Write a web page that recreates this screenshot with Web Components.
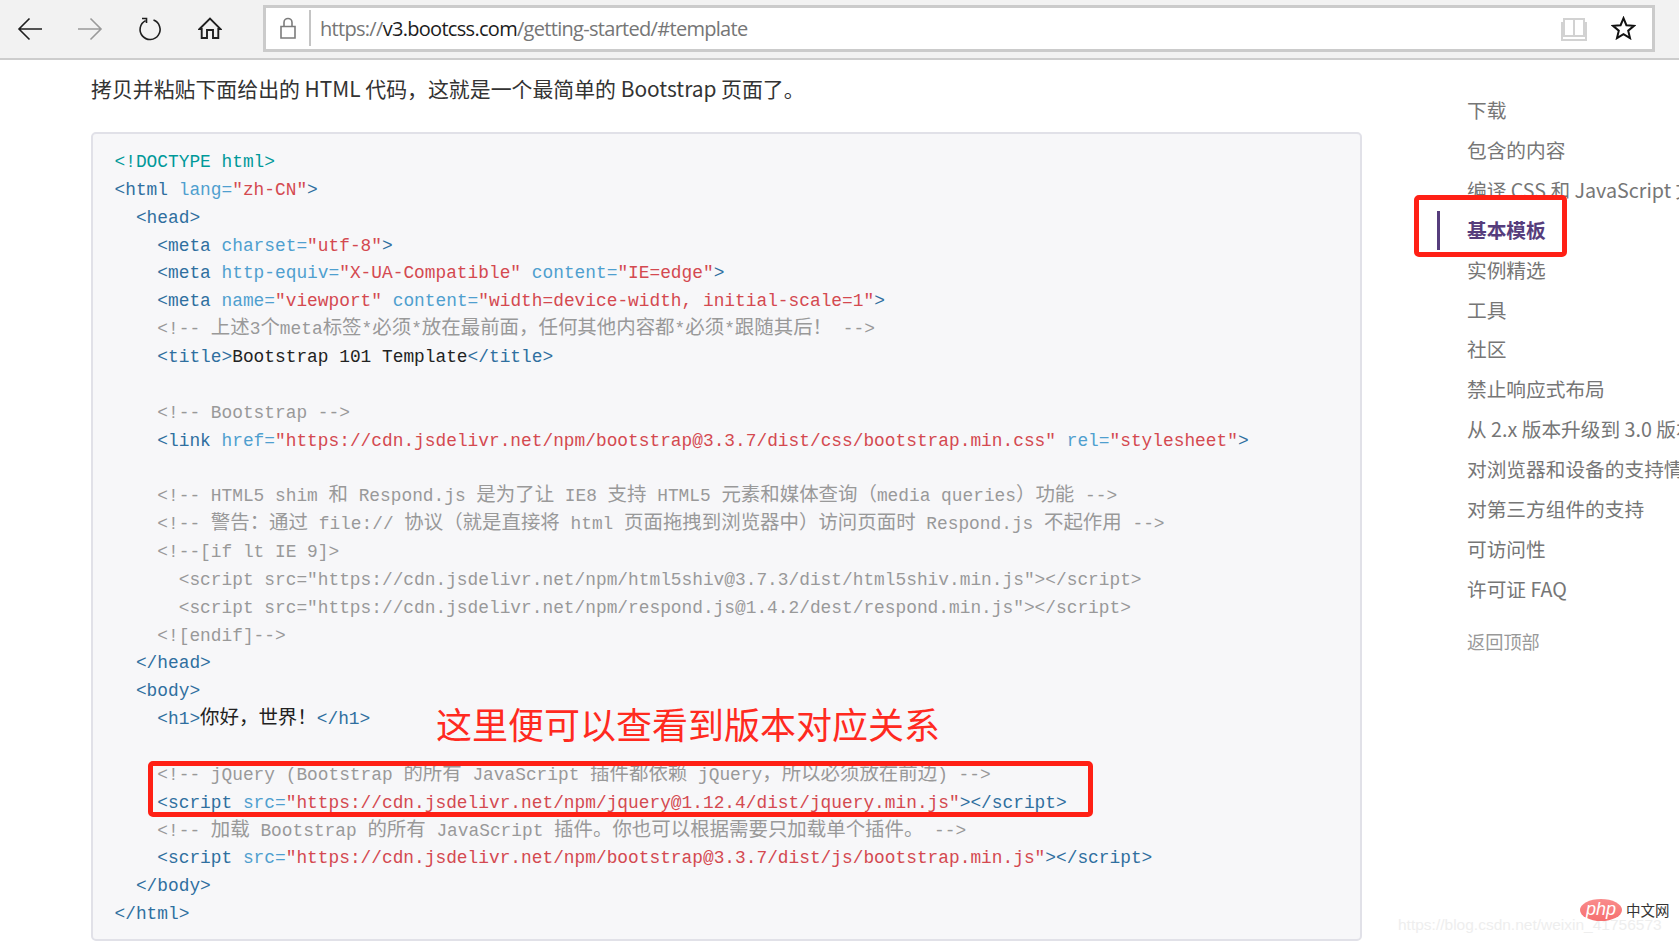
<!DOCTYPE html>
<html lang="zh-CN">
<head>
<meta charset="utf-8">
<title>基本模板</title>
<style>
  html, body { margin: 0; padding: 0; height: 943px; overflow: hidden; background: #fff; }
  body { font-family: "Noto Sans CJK SC", sans-serif; }
</style>
</head>
<body>
<browser-bar url="https://v3.bootcss.com/getting-started/#template"></browser-bar>
<doc-page>
  <code-block></code-block>
  <side-nav slot="side"></side-nav>
</doc-page>
<script>
class BrowserBar extends HTMLElement {
    constructor() {
        super();
        this.shadowDOM = this.attachShadow({ mode: "open" });
    }

    connectedCallback() {
        this.render();
    }

    render() {
        const url = this.getAttribute("url");
        const host = url.slice(8, 22);
        const rest = url.slice(22);
        this.shadowDOM.innerHTML = `
        <style>
          :host {
            display: flex;
            align-items: center;
            height: 58px;
            background: #f2f2f2;
            border-bottom: 2px solid #cdcdcd;
            font-family: "Open Sans", sans-serif;
          }
          .btn {
            width: 60px;
            height: 58px;
            display: flex;
            align-items: center;
            justify-content: center;
            flex: none;
          }
          svg { display: block; fill: none; stroke: #1f1f1f; stroke-width: 1.6; flex: none; }
          .nav { display: flex; width: 263px; flex: none; }
          .url {
            flex: none;
            width: 1386px;
            height: 41px;
            margin-top: -2px;
            background: #fff;
            border: 3px solid #cbcbcb;
            display: flex;
            align-items: center;
          }
          .lock { width: 43px; height: 36px; display: flex; align-items: center; justify-content: center; border-right: 2px solid #c4c4c4; flex: none; }
          .addr { padding-left: 9px; flex: 1; font-size: 20px; letter-spacing: -0.700px; color: #767676; white-space: nowrap; }
          .addr b { font-weight: 400; color: #1c1c1c; }
          .end { display: flex; align-items: center; gap: 24px; padding-right: 16px; }
          .book { margin-top: 3px; stroke: #d2d2d2; stroke-width: 2; }
        </style>
        <div class="nav">
          <div class="btn"><svg width="26" height="24" viewBox="0 0 26 24"><path d="M25 12H2M12.500 1.500 2 12l10.500 10.500"/></svg></div>
          <div class="btn"><svg width="26" height="24" viewBox="0 0 26 24" style="stroke:#9a9a9a"><path d="M1 12h23M13.500 1.500 24 12 13.500 22.500"/></svg></div>
          <div class="btn"><svg width="24" height="26" viewBox="0 0 24 26"><path d="M15.500 4.100A10 10 0 1 1 7.500 4.600M4 2.500H8.500V7"/></svg></div>
          <div class="btn"><svg width="24" height="24" viewBox="0 0 24 24" style="stroke-width:1.900"><path d="M1.500 12 12 1.500 22.500 12H20.300V21H15V13H9V21H3.700V12z"/></svg></div>
        </div>
        <div class="url">
          <div class="lock"><svg width="16" height="22" viewBox="0 0 16 22" style="stroke:#7c7c7c"><path d="M4 9V5.500a4 4 0 0 1 8 0V9M1 9.500h14V21H1z"/></svg></div>
          <div class="addr">https://<b>${host}</b>${rest}</div>
          <div class="end">
            <svg class="book" width="26" height="24" viewBox="0 0 26 24"><path d="M3 1h10v17H3zM13 1h10v17H13zM3 5H1v17h24V5h-2"/></svg>
            <svg width="25" height="24" viewBox="0 0 25 24" style="stroke:#111;stroke-width:2"><path d="M12.500 2.200 15.400 9.200l7.600.6-5.800 4.900 1.800 7.400-6.500-4-6.500 4 1.800-7.400L2 9.800l7.600-.6z"/></svg>
          </div>
        </div>`;
    }
}

class DocPage extends HTMLElement {
    constructor() {
        super();
        this.shadowDOM = this.attachShadow({ mode: "open" });
    }

    connectedCallback() {
        this.render();
    }

    render() {
        this.shadowDOM.innerHTML = `
        <style>
          :host {
            display: grid;
            grid-template-columns: 1271px 1fr;
            column-gap: 105px;
            padding-left: 91px;
            position: relative;
            height: 883px;
            overflow: hidden;
            font-family: "Noto Sans CJK SC", sans-serif;
          }
          p {
            margin: 10px 0 26px;
            line-height: 36px;
            font-size: 20.900px;
            color: #333;
            white-space: nowrap;
          }
          .red {
            position: absolute;
            box-sizing: border-box;
            border: 5px solid #ff2015;
            border-radius: 5px;
          }
          .note {
            position: absolute;
            left: 436px;
            top: 637px;
            font-size: 36px;
            line-height: 52px;
            color: #ff2a1f;
            white-space: nowrap;
          }
          .mark {
            position: absolute;
            left: 1398px;
            top: 854px;
            font: 15.500px/22px "Liberation Sans", sans-serif;
            color: #eeeeee;
            white-space: nowrap;
          }
          .php {
            position: absolute;
            left: 1580px;
            top: 839px;
            display: flex;
            align-items: center;
            gap: 4px;
            white-space: nowrap;
          }
          .php i {
            width: 42px;
            height: 22px;
            border-radius: 50%;
            background: linear-gradient(#f98c8c, #f66f6f);
            color: #fff;
            font: italic 18px/20px "Liberation Sans", sans-serif;
            text-align: center;
          }
          .php span { font: 14.500px/22px "Noto Sans CJK SC", sans-serif; color: #333; }
        </style>
        <div>
          <p>拷贝并粘贴下面给出的 HTML 代码，这就是一个最简单的 Bootstrap 页面了。</p>
          <slot></slot>
        </div>
        <slot name="side"></slot>
        <div class="red" style="left:148px;top:701px;width:945px;height:56px"></div>
        <div class="red" style="left:1414px;top:135px;width:153px;height:62px"></div>
        <div class="note">这里便可以查看到版本对应关系</div>
        <div class="mark">https://blog.csdn.net/weixin_41756573</div>
        <div class="php"><i>php</i><span>中文网</span></div>`;
    }
}

class CodeBlock extends HTMLElement {
    constructor() {
        super();
        this.shadowDOM = this.attachShadow({ mode: "open" });
    }

    connectedCallback() {
        this.render();
    }

    // wraps CJK runs so they can be sized apart from the mono text
    cjk(text) {
        return text
            .replace(/&/g, "&amp;").replace(/</g, "&lt;").replace(/>/g, "&gt;")
            .replace(/[\u3000-\u9fff\uff00-\uffef]+/g, m => `<span class="z">${m}</span>`);
    }

    tag(line) {
        return line.replace(/<[^>]*>|[^<]+/g, part => {
            if (part[0] !== "<") return `<span class="x">${this.cjk(part)}</span>`;
            const m = part.match(/^(<\/?\w+)(.*?)(>)$/);
            const attrs = m[2].replace(/(\s+)([\w-]+=)("[^"]*")/g, (a, sp, name, val) =>
                `${sp}<span class="a">${name}</span><span class="s">${this.cjk(val)}</span>`);
            return `<span class="t">${this.cjk(m[1])}</span>${attrs}<span class="t">&gt;</span>`;
        });
    }

    render() {
        const lines = [
            "d<!DOCTYPE html>",
            't<html lang="zh-CN">',
            "t  <head>",
            't    <meta charset="utf-8">',
            't    <meta http-equiv="X-UA-Compatible" content="IE=edge">',
            't    <meta name="viewport" content="width=device-width, initial-scale=1">',
            "c    <!-- 上述3个meta标签*必须*放在最前面，任何其他内容都*必须*跟随其后！ -->",
            "t    <title>Bootstrap 101 Template</title>",
            "c",
            "c    <!-- Bootstrap -->",
            't    <link href="https://cdn.jsdelivr.net/npm/bootstrap@3.3.7/dist/css/bootstrap.min.css" rel="stylesheet">',
            "c",
            "c    <!-- HTML5 shim 和 Respond.js 是为了让 IE8 支持 HTML5 元素和媒体查询（media queries）功能 -->",
            "c    <!-- 警告：通过 file:// 协议（就是直接将 html 页面拖拽到浏览器中）访问页面时 Respond.js 不起作用 -->",
            "c    <!--[if lt IE 9]>",
            'c      <script src="https://cdn.jsdelivr.net/npm/html5shiv@3.7.3/dist/html5shiv.min.js"><\/script>',
            'c      <script src="https://cdn.jsdelivr.net/npm/respond.js@1.4.2/dest/respond.min.js"><\/script>',
            "c    <![endif]-->",
            "t  </head>",
            "t  <body>",
            "t    <h1>你好，世界！</h1>",
            "c",
            "c    <!-- jQuery (Bootstrap 的所有 JavaScript 插件都依赖 jQuery，所以必须放在前边) -->",
            't    <script src="https://cdn.jsdelivr.net/npm/jquery@1.12.4/dist/jquery.min.js"><\/script>',
            "c    <!-- 加载 Bootstrap 的所有 JavaScript 插件。你也可以根据需要只加载单个插件。 -->",
            't    <script src="https://cdn.jsdelivr.net/npm/bootstrap@3.3.7/dist/js/bootstrap.min.js"><\/script>',
            "t  </body>",
            "t</html>"
        ];
        const rows = lines.map(l => {
            const kind = l[0], text = l.slice(1);
            const inner = kind === "t" ? text.replace(/^\s+/, "") : text;
            const indent = kind === "t" ? text.match(/^\s*/)[0] : "";
            if (kind === "t") return `<div>${indent}${this.tag(inner)}</div>`;
            return `<div class="${kind}">${this.cjk(text) || " "}</div>`;
        }).join("");
        this.shadowDOM.innerHTML = `
        <style>
          :host {
            display: block;
            box-sizing: border-box;
            width: 1271px;
            height: 809px;
            padding: 15px 20px 9px 21.500px;
            background: #f7f7f9;
            border: 2px solid #e1e1e8;
            border-radius: 5px;
            overflow: hidden;
          }
          div {
            font: 17.840px/27.860px "Liberation Mono", "Noto Sans CJK SC", monospace;
            height: 27.860px;
            white-space: pre;
          }
          .z { font-family: "Noto Sans CJK SC", sans-serif; font-size: 19.450px; line-height: 0; }
          .t { color: #2f6f9f; }
          .a { color: #4f9fcf; }
          .s { color: #d44950; }
          .x { color: #222; }
          .c { color: #999; }
          .d { color: #009999; }
        </style>
        ${rows}`;
    }
}

class SideNav extends HTMLElement {
    constructor() {
        super();
        this.shadowDOM = this.attachShadow({ mode: "open" });
    }

    connectedCallback() {
        this.render();
    }

    render() {
        const items = ["下载", "包含的内容", "编译 CSS 和 JavaScript 文件", "基本模板", "实例精选", "工具", "社区",
            "禁止响应式布局", "从 2.x 版本升级到 3.0 版本", "对浏览器和设备的支持情况", "对第三方组件的支持", "可访问性", "许可证 FAQ"];
        this.shadowDOM.innerHTML = `
        <style>
          :host {
            display: block;
            padding-top: 30.400px;
            font-family: "Noto Sans CJK SC", sans-serif;
            white-space: nowrap;
          }
          a {
            display: block;
            height: 39.850px;
            line-height: 39.850px;
            font-size: 19.700px;
            color: #767676;
            position: relative;
          }
          a.on { color: #563d7c; font-weight: 700; }
          a.on::before {
            content: "";
            position: absolute;
            left: -30px;
            top: 1px;
            width: 3px;
            height: 39px;
            background: #563d7c;
          }
          .top { margin-top: 18px; height: 30px; line-height: 30px; font-size: 18.200px; color: #999; }
        </style>
        ${items.map(t => `<a class="${t === "基本模板" ? "on" : ""}">${t}</a>`).join("")}
        <a class="top">返回顶部</a>`;
    }
}

customElements.define("browser-bar", BrowserBar);
customElements.define("doc-page", DocPage);
customElements.define("code-block", CodeBlock);
customElements.define("side-nav", SideNav);
</script>
</body>
</html>
